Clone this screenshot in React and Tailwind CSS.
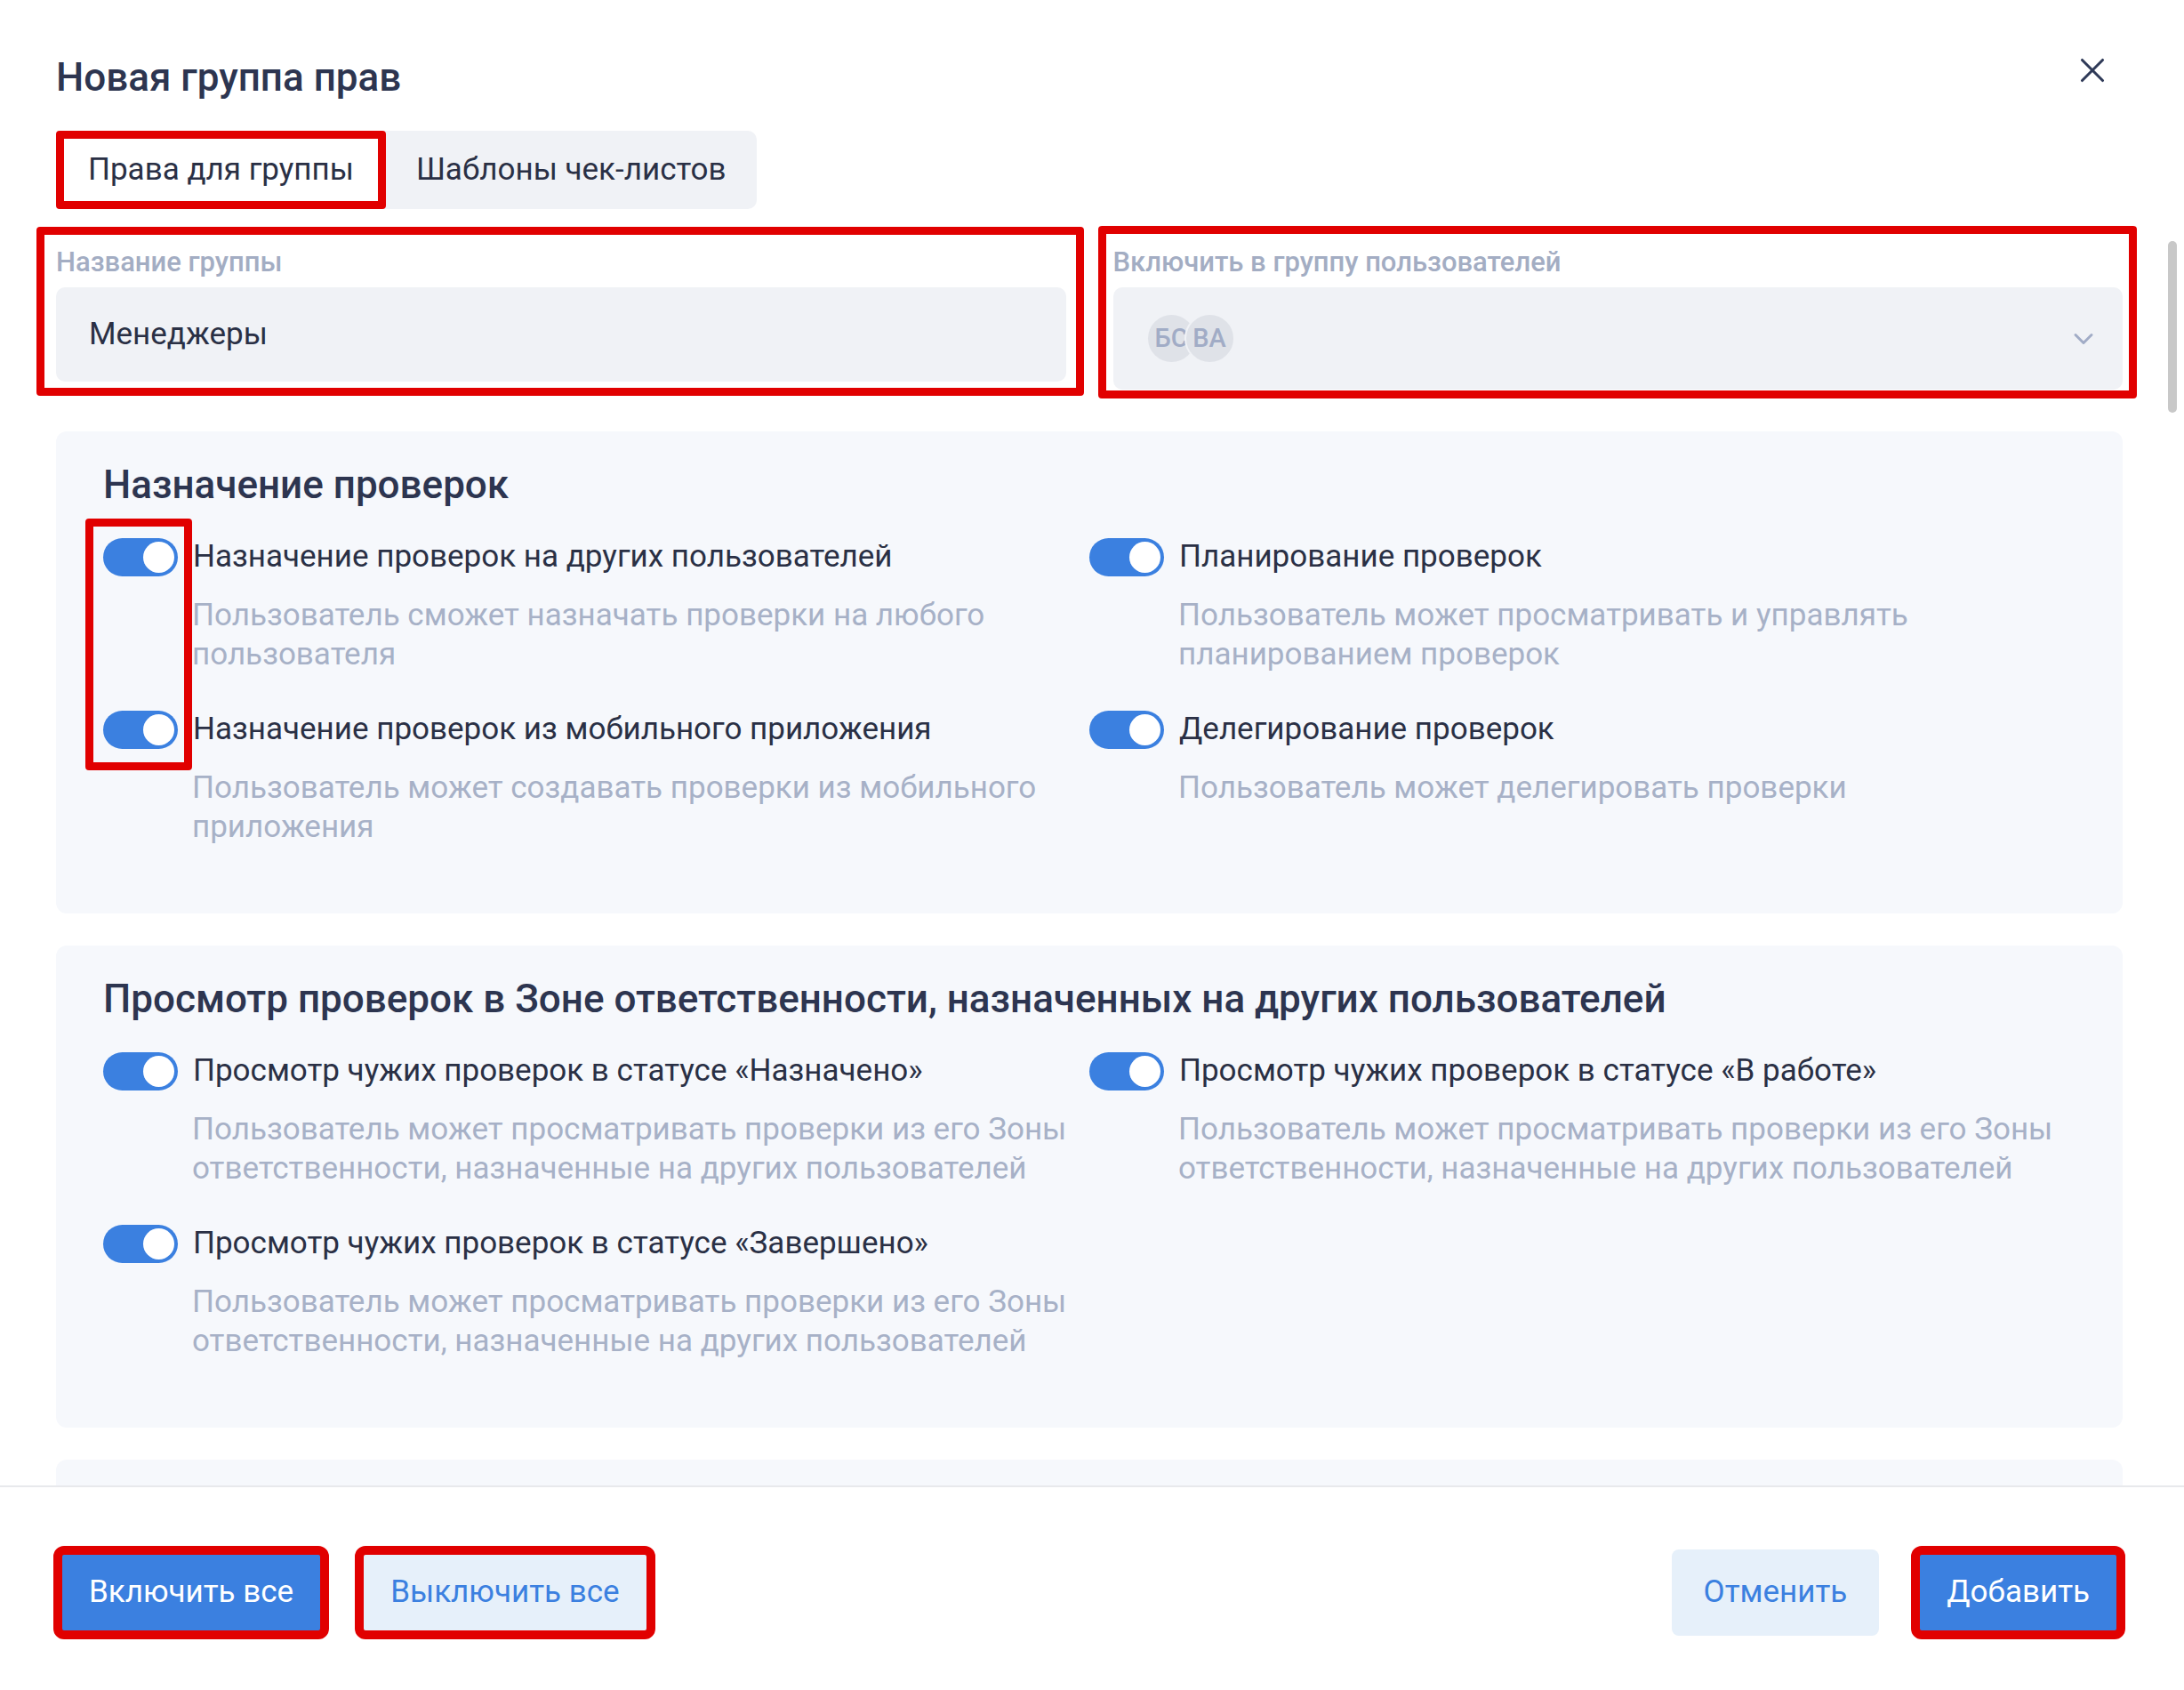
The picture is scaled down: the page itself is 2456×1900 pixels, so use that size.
import { X, ChevronDown } from 'lucide-react';

// Тумблер включён — синий трек, белый кружок справа
const Toggle = () => (
    <span className="flex h-[43px] w-[84px] shrink-0 items-center justify-end rounded-full bg-[#3b80e0] px-[4px]">
        <span className="h-[35px] w-[35px] rounded-full bg-white" />
    </span>
);

const Permission = ({ label, desc }) => (
    <div>
        <div className="flex items-center gap-[17px]">
            <Toggle />
            <span className="text-[35px] leading-[44px] text-[#2a3045]">{label}</span>
        </div>
        <p className="ml-[100px] mt-[22px] pr-[10px] text-[35px] leading-[44px] text-[#a7b1c7]">{desc}</p>
    </div>
);

const Section = ({ title, items, children }) => (
    <div className="relative rounded-[12px] bg-[#f6f8fc] px-[53px] pt-[35px] pb-[75px]">
        <h3 className="text-[44px] font-medium leading-[50px] text-[#2d3550]">{title}</h3>
        <div className="mt-[34px] grid grid-cols-2 gap-y-[40px]">
            {items.map((it) => (
                <Permission key={it.label} label={it.label} desc={it.desc} />
            ))}
        </div>
        {children}
    </div>
);

const assignItems = [
    { label: 'Назначение проверок на других пользователей', desc: 'Пользователь сможет назначать проверки на любого пользователя' },
    { label: 'Планирование проверок', desc: 'Пользователь может просматривать и управлять планированием проверок' },
    { label: 'Назначение проверок из мобильного приложения', desc: 'Пользователь может создавать проверки из мобильного приложения' },
    { label: 'Делегирование проверок', desc: 'Пользователь может делегировать проверки' },
];

const viewItems = [
    { label: 'Просмотр чужих проверок в статусе «Назначено»', desc: 'Пользователь может просматривать проверки из его Зоны ответственности, назначенные на других пользователей' },
    { label: 'Просмотр чужих проверок в статусе «В работе»', desc: 'Пользователь может просматривать проверки из его Зоны ответственности, назначенные на других пользователей' },
    { label: 'Просмотр чужих проверок в статусе «Завершено»', desc: 'Пользователь может просматривать проверки из его Зоны ответственности, назначенные на других пользователей' },
];

export default function App() {
    return (
        <div className="flex h-[1900px] w-[2456px] flex-col overflow-hidden bg-white font-['Roboto',sans-serif]">
            {/* Прокручиваемая часть окна */}
            <div className="relative h-[1670px] shrink-0 overflow-hidden pl-[63px] pr-[69px]">
                <div className="flex items-center justify-between pt-[62px]">
                    <h2 className="text-[44px] font-medium leading-[50px] text-[#2d3550]">Новая группа прав</h2>
                    <button className="mr-[11px] -mt-[16px] text-[#2f3a58]">
                        <X size={46} strokeWidth={1.6} />
                    </button>
                </div>

                <div className="mt-[35px] flex">
                    <div className="flex h-[88px] rounded-[10px] bg-[#f0f2f6] text-[35px] text-[#2a3045]">
                        <button className="rounded-[4px] border-[9px] border-[#e10000] bg-white px-[27px]">Права для группы</button>
                        <button className="px-[34px]">Шаблоны чек-листов</button>
                    </div>
                </div>

                <div className="mt-[40px] grid grid-cols-2 items-start gap-x-[53px]">
                    <div className="relative">
                        <label className="block text-[31px] font-medium leading-[40px] text-[#a3adc3]">Название группы</label>
                        <div className="mt-[8px] flex h-[106px] items-center rounded-[10px] bg-[#f0f2f6] px-[37px] text-[35px] text-[#2a3045]">
                            Менеджеры
                        </div>
                        <div className="pointer-events-none absolute -top-[20px] -bottom-[16px] -left-[22px] -right-[20px] rounded-[4px] border-[9px] border-[#e10000]" />
                    </div>
                    <div className="relative">
                        <label className="block text-[31px] font-medium leading-[40px] text-[#a3adc3]">Включить в группу пользователей</label>
                        <div className="mt-[8px] flex h-[115px] items-center justify-between rounded-[10px] bg-[#f0f2f6] pl-[39px] pr-[26px]">
                            <div className="flex items-center">
                                <span className="flex h-[53px] w-[53px] items-center justify-center rounded-full bg-[#dfe2e8] text-[29px] font-medium text-[#a1acc6]">БС</span>
                                <span className="-ml-[12px] flex h-[57px] w-[57px] items-center justify-center rounded-full border-2 border-[#f0f2f6] bg-[#dfe2e8] text-[29px] font-medium text-[#a1acc6]">ВА</span>
                            </div>
                            <ChevronDown size={36} strokeWidth={2} className="text-[#a1acc6]" />
                        </div>
                        <div className="pointer-events-none absolute -top-[21px] -bottom-[10px] -left-[17px] -right-[16px] rounded-[4px] border-[9px] border-[#e10000]" />
                    </div>
                </div>

                <div className="mt-[47px] flex flex-col gap-[36px]">
                    <Section title="Назначение проверок" items={assignItems}>
                        <div className="pointer-events-none absolute left-[33px] top-[98px] h-[283px] w-[120px] rounded-[4px] border-[9px] border-[#e10000]" />
                    </Section>
                    <Section title="Просмотр проверок в Зоне ответственности, назначенных на других пользователей" items={viewItems} />
                    <div className="h-[300px] rounded-[12px] bg-[#f6f8fc]" />
                </div>

                {/* ползунок полосы прокрутки */}
                <div className="absolute left-[2438px] top-[271px] h-[193px] w-[10px] rounded-full bg-[#c8c8c8]" />
            </div>

            {/* Нижняя панель с кнопками */}
            <div className="flex flex-1 items-start justify-between border-t-2 border-[#e8e9ec] pl-[64px] pr-[70px] pt-[70px] text-[35px]">
                <div className="flex gap-[37px]">
                    <button className="h-[97px] rounded-[8px] bg-[#3b80e0] px-[36px] text-white outline-[10px] outline-[#e10000] -outline-offset-[6px]">Включить все</button>
                    <button className="h-[97px] rounded-[8px] bg-[#e6f0fa] px-[36px] text-[#3b80e0] outline-[10px] outline-[#e10000] -outline-offset-[6px]">Выключить все</button>
                </div>
                <div className="flex gap-[40px]">
                    <button className="h-[97px] rounded-[8px] bg-[#e6f0fa] px-[36px] text-[#3b80e0]">Отменить</button>
                    <button className="h-[97px] rounded-[8px] bg-[#3b80e0] px-[36px] text-white outline-[10px] outline-[#e10000] -outline-offset-[6px]">Добавить</button>
                </div>
            </div>
        </div>
    );
}
